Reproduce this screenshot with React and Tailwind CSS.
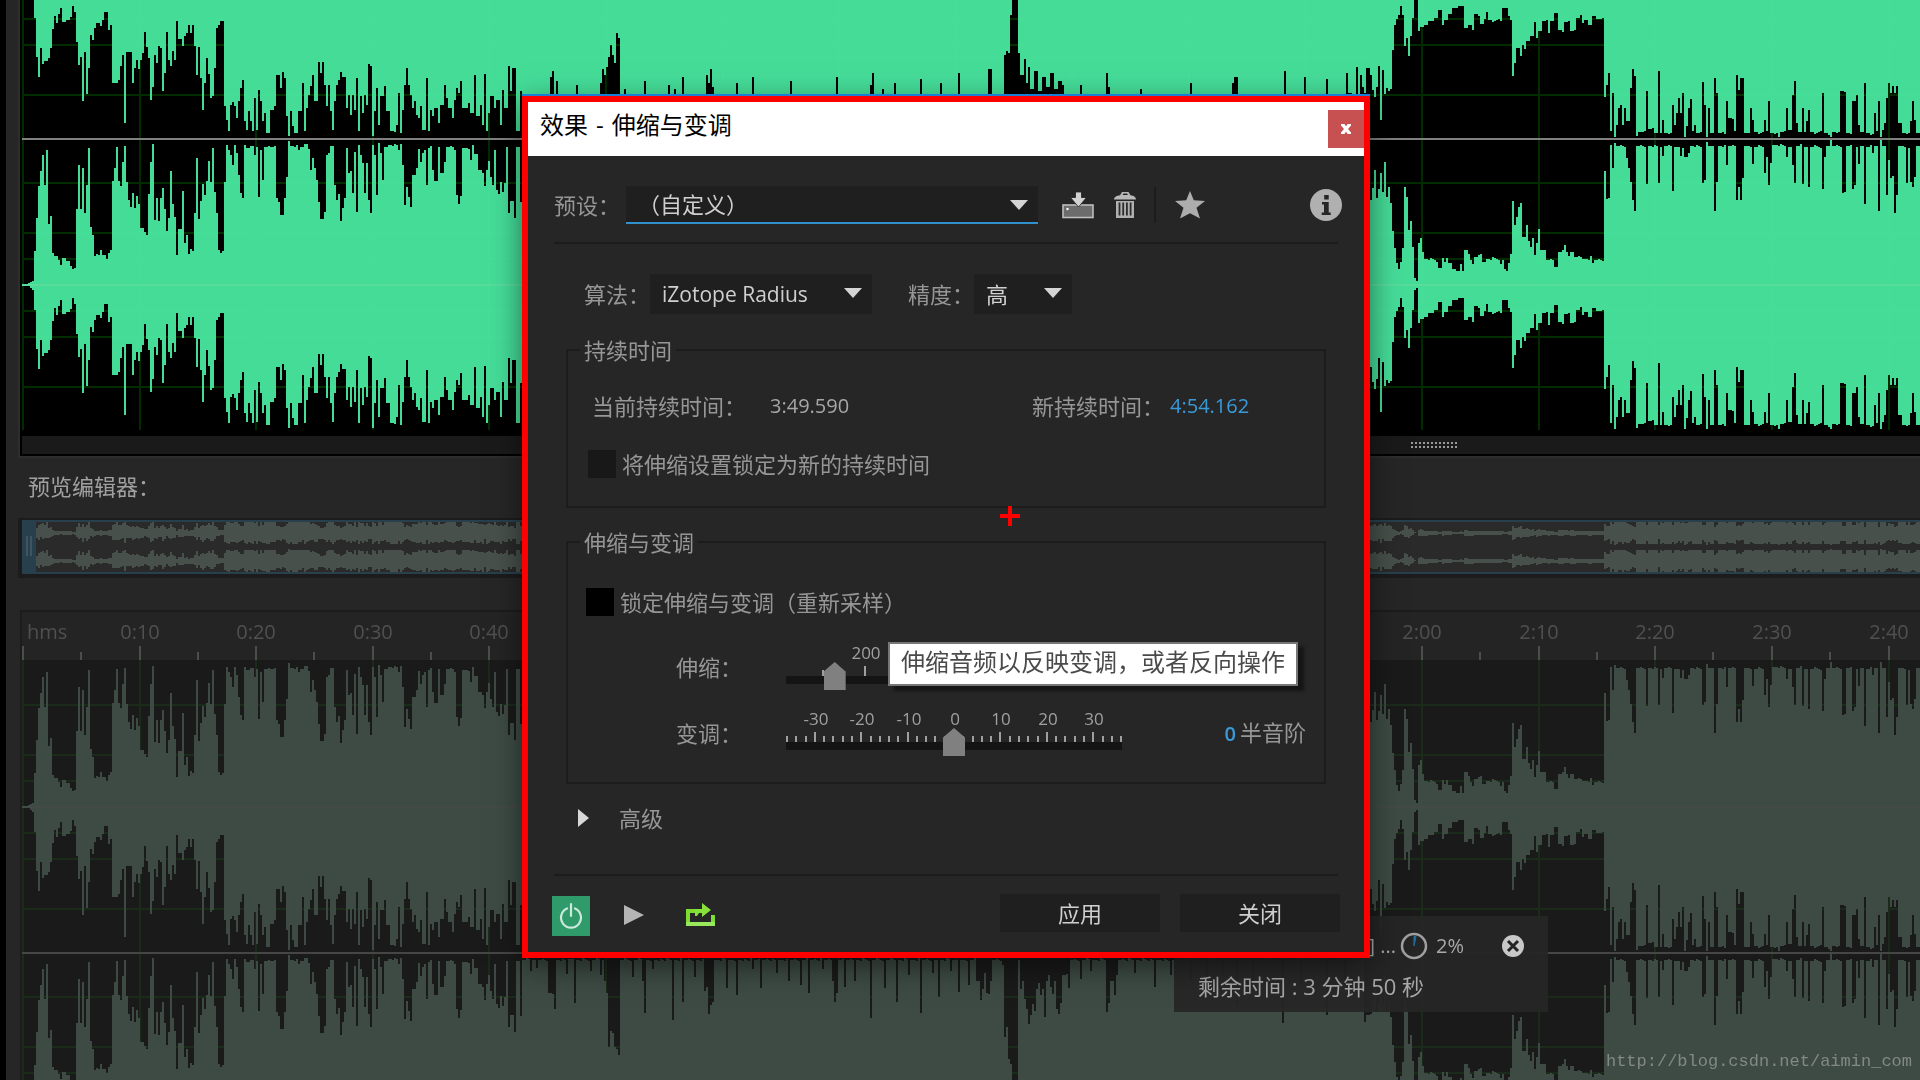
import { useState } from 'react'
import clsx from 'clsx'

// Peak envelopes, "x:amplitude". Each value holds until the next x.
const PEAKS_UP = `
22:0 25:1 28:2 30:3 32:4 34:34 36:67 38:99 40:114 42:130 44:100 46:135 48:61 50:69 52:32 54:29 57:25 59:20 61:14 62:27 66:24 70:19 72:16 74:17
76:76 78:120 80:76 82:117 84:72 86:100 88:137 90:58 92:50 94:29 96:31 98:30 100:35 102:30 106:26 108:32 110:35 112:104 114:117 116:138 118:104
120:99 122:123 124:139 126:103 128:85 130:78 132:92 134:77 136:89 138:81 140:57 144:53 146:50 148:91 150:123 152:141 154:65 156:87 158:64 160:87
162:97 164:76 166:54 168:67 170:114 172:81 174:68 176:30 178:56 182:94 184:42 186:50 188:31 190:36 192:34 194:72 196:127 198:66 200:84 202:101
204:90 206:104 208:124 210:103 212:137 214:93 216:72 218:35 220:32 222:34 224:103 226:140 228:135 230:130 232:120 234:140 236:132 238:110 240:92
242:87 244:140 246:137 250:139 254:130 256:138 258:88 260:135 262:105 264:138 270:138 274:139 276:87 278:83 280:70 284:87 286:108 288:144 290:139
298:135 300:138 304:141 308:136 310:115 312:127 314:117 316:105 318:83 320:66 324:73 326:130 328:132 330:139 334:100 336:85 338:91 340:64 342:77
344:87 346:137 348:112 350:114 352:92 354:133 356:73 358:140 360:130 362:122 364:92 366:122 368:85 370:72 372:140 374:130 376:90 378:142 380:132
382:105 384:138 388:140 398:135 400:141 402:120 404:80 406:98 408:88 410:78 412:110 416:117 418:136 420:123 422:132 424:135 426:100 428:137
430:139 432:115 434:104 438:138 440:112 444:123 446:138 454:135 456:90 458:81 460:89 462:137 470:125 472:140 474:131 478:115 482:112 484:99
486:115 488:124 490:108 492:100 494:135 496:95 498:91 500:103 502:93 504:102 506:138 508:72 510:84 514:67 516:138 520:83 522:139
530:128 532:139 536:131 538:139 548:106 552:105 554:90 556:139 566:125 568:140 574:96 576:139 590:128 592:139 600:124 602:139 604:118 606:106
608:52 610:68 612:66 614:52 616:50 618:44 620:139 632:122 634:139 642:118 644:86 646:139 652:130 654:139 672:79 674:139 682:97 684:139 694:122
696:139 704:108 706:112 708:85 710:94 712:97 714:139 726:111 728:139 736:104 738:139 752:130 754:139 760:111 762:139 776:126 778:139 788:118
790:139 800:114 802:139 808:106 810:139 822:130 824:139 832:118 834:97 836:106 838:139 844:112 846:139 854:118 856:139 870:81 872:139 884:111
886:139 896:97 898:139 908:124 910:139 920:86 922:139 932:126 934:139 938:102 940:139 950:128 952:139 958:107 960:139 968:114 970:139 976:118
980:99 982:110 984:126 986:106 988:105 990:118 992:139 1002:134 1004:62 1006:72 1008:40 1010:35 1012:5 1018:139 1020:110 1022:118 1024:100
1026:90 1028:75 1030:84 1032:95 1034:88 1036:110 1038:116 1040:104 1042:110 1044:82 1046:118 1048:124 1050:112 1052:105 1054:118 1056:90
1058:85 1060:96 1062:124 1068:111 1070:139 1080:120 1082:139 1090:128 1092:139 1106:87 1108:96 1110:118 1114:104 1116:124 1118:139 1134:126
1136:139 1154:112 1156:139 1170:124 1172:139 1190:118 1192:139 1206:108 1208:139 1222:124 1224:139 1236:94 1238:139 1252:116 1254:139
1282:76 1284:139 1300:112 1302:139 1326:84 1328:139 1344:116 1346:139 1364:77 1366:84
1370:85 1372:97 1374:115 1376:87 1378:96 1380:112 1382:93 1384:123 1386:88 1388:98 1390:82 1392:54 1394:37 1396:22 1398:16 1400:23 1402:37
1404:98 1406:88 1408:55 1410:64 1412:38 1414:7 1416:4 1418:42 1420:47 1422:33 1424:26 1436:23 1438:17 1442:27 1444:23 1446:27 1448:22 1452:16
1456:14 1460:21 1462:14 1464:35 1468:31 1470:25 1472:21 1474:28 1480:31 1482:23 1486:26 1500:21 1502:25 1504:16 1506:14 1508:22 1510:31
1512:84 1514:60 1516:68 1518:78 1520:82 1522:48 1526:60 1528:44 1530:38 1532:47 1534:30 1536:42 1538:56 1540:35 1546:25 1554:18 1558:33
1564:40 1566:33 1568:29 1570:33 1574:28 1582:26 1590:29 1592:22 1594:25 1604:114 1606:86 1608:87 1610:140 1612:117 1614:142 1616:139 1626:127
1628:117 1630:103 1632:85 1634:74 1636:139 1646:101 1648:139 1658:102 1660:138 1662:129 1664:139 1672:94 1674:138 1680:129 1682:137 1684:128
1688:132 1690:139 1702:102 1704:105 1706:143 1708:139 1714:74 1716:103 1718:139 1726:120 1728:139 1736:85 1738:98 1740:85 1742:107 1744:139
1752:121 1754:138 1764:112 1766:128 1768:100 1770:122 1772:140 1786:128 1788:138 1792:120 1794:102 1796:139 1802:101 1804:138 1808:98 1810:138
1822:96 1824:128 1826:139 1830:145 1832:139 1842:92 1844:93 1846:139 1852:96 1854:100 1856:138 1858:121 1860:139 1864:81 1866:138 1872:132
1874:139 1878:74 1880:145 1882:139 1886:90 1888:125 1890:107 1892:109 1894:72 1896:90 1898:139 1906:102 1908:137 1910:103 1912:98 1914:108 1916:139`

const PEAKS_DOWN = `
22:0 26:1 30:3 32:5 34:25 36:64 38:84 40:55 42:71 44:68 48:65 50:55 52:36 54:23 56:30 58:21 60:15 62:29 66:27 70:24 72:13 74:19 76:49 78:72
80:64 82:108 84:59 86:101 88:75 90:42 92:47 94:35 96:30 100:33 102:27 104:19 108:37 110:32 112:90 118:87 120:73 122:62 124:130 126:59 132:90
134:75 136:67 138:76 140:67 142:60 144:39 146:54 148:65 150:107 152:94 154:62 156:70 158:53 160:55 162:98 164:80 166:39 168:67 170:73 172:58
174:67 176:28 178:46 182:53 184:43 186:40 188:32 190:40 192:32 194:53 196:82 198:54 200:85 202:117 204:90 206:65 208:81 210:105 212:103 214:75
216:35 218:32 220:28 224:113 226:127 228:138 230:112 232:109 234:113 236:125 238:108 240:95 242:87 244:128 246:137 248:118 250:128 252:138
254:105 256:137 258:97 260:108 262:128 264:120 266:140 270:117 274:113 276:82 280:95 282:79 284:85 286:123 288:143 290:118 292:133 294:140
298:118 302:90 304:138 306:115 308:102 310:93 312:82 314:108 318:69 320:80 322:69 324:92 326:113 328:92 330:118 332:137 334:108 336:92 338:87
340:79 342:84 346:115 348:102 350:122 352:102 354:117 356:85 358:138 360:103 362:120 364:102 366:112 368:71 370:73 372:143 374:118 376:95
378:132 380:103 384:93 386:118 390:138 396:132 398:100 400:140 402:117 404:92 406:75 408:92 410:102 412:115 414:108 416:122 418:125 420:113
422:137 426:85 428:138 430:117 432:123 434:115 438:130 440:112 444:92 446:105 448:115 452:125 454:107 456:95 458:100 460:88 462:115 468:110
470:120 474:82 476:123 480:112 482:132 484:81 486:138 488:120 490:103 494:115 496:107 500:132 502:97 504:115 508:73 510:98 512:75 516:138
520:98 522:130 550:84 552:78 554:118 556:88 558:130 576:92 578:130 600:90 602:76 604:82 606:74 608:64 610:52 612:62 614:70 616:40 618:45 620:120
624:96 626:130 644:88 646:130 667:92 670:130 673:96 675:130 682:84 684:130 706:82 708:90 710:76 712:94 714:130 736:90 738:130 752:84 754:130
790:88 792:130 835:84 837:130 870:92 872:80 874:130 881:96 883:130 894:90 896:130 920:86 922:130 939:90 941:130 957:80 959:130 988:76 992:130
1004:62 1006:58 1008:60 1010:22 1012:6 1018:60 1020:82 1024:66 1026:90 1028:74 1030:96 1034:78 1038:98 1042:84 1046:94 1050:80 1054:96 1058:88
1062:92 1064:130 1080:92 1082:130 1106:80 1108:94 1110:130 1140:96 1142:130 1190:90 1192:130 1231:90 1233:84 1237:130 1283:78 1285:130
1303:84 1305:130 1325:86 1327:130 1345:80 1347:100 1355:74 1357:110 1360:82 1362:94 1364:100 1366:75
1370:82 1372:97 1374:104 1376:94 1378:73 1380:127 1382:77 1384:101 1386:95 1388:98 1390:96 1392:57 1394:32 1396:26 1398:22 1400:13 1402:22
1404:53 1406:45 1408:63 1410:43 1412:25 1414:5 1416:3 1418:38 1420:34 1424:32 1428:28 1434:25 1438:17 1442:32 1444:27 1448:21 1452:15 1458:13
1464:35 1468:32 1472:37 1474:21 1480:31 1484:26 1486:19 1488:27 1502:15 1508:23 1510:27 1512:83 1514:70 1516:55 1520:63 1522:52 1524:56
1526:48 1530:43 1534:29 1536:45 1538:38 1542:28 1548:40 1550:28 1554:20 1558:37 1564:29 1570:38 1576:25 1580:22 1582:30 1584:27 1588:32
1592:23 1596:26 1604:104 1606:92 1608:80 1610:138 1612:100 1614:144 1616:132 1618:115 1620:112 1622:132 1624:115 1626:128 1630:95 1632:76
1634:83 1636:143 1638:139 1646:98 1648:136 1654:140 1658:78 1660:140 1662:127 1664:140 1672:112 1674:132 1676:120 1678:105 1680:120 1682:100
1684:144 1686:133 1688:115 1690:106 1692:138 1694:132 1696:140 1702:89 1704:112 1706:144 1708:115 1710:140 1714:85 1716:100 1718:140 1726:108
1728:125 1734:138 1736:82 1738:97 1740:85 1744:140 1750:115 1752:127 1754:139 1764:127 1766:138 1768:108 1770:140 1778:144 1780:139 1786:115
1788:137 1792:102 1794:88 1796:130 1798:139 1802:115 1804:139 1806:128 1808:117 1810:139 1822:100 1824:140 1830:144 1832:139 1840:98 1846:140
1852:108 1856:102 1858:132 1860:139 1864:90 1866:140 1874:120 1876:138 1878:108 1880:144 1882:137 1884:130 1886:105 1888:90 1890:100 1892:93
1894:100 1896:93 1898:130 1902:140 1910:128 1912:108 1914:127 1916:140`

const START = 22
const END = 1920

// Expand the peaks to 2-unit columns; long loud runs get a little ripple
function expand(text) {
  const peaks = text.trim().split(/\s+/).map(p => p.split(':').map(Number))
  const columns = []
  let i = 0
  for (let x = START; x < END; x += 2) {
    while (i + 1 < peaks.length && peaks[i + 1][0] <= x) i++
    const [from, amp] = peaks[i]
    const ripple = amp > 20 && x - from >= 4 ? ((x * 13) % 7 >> 1) - 1 : 0
    columns.push(amp + ripple)
  }
  return columns
}

const UP = expand(PEAKS_UP)
const DOWN = expand(PEAKS_DOWN)

function wavePath(center, scale = 1) {
  let d = `M${START} ${center}`
  UP.forEach((a, i) => { d += `V${center - a * scale}H${START + (i + 1) * 2}` })
  for (let i = DOWN.length - 1; i >= 0; i--) {
    d += `V${center + DOWN[i] * scale}H${START + i * 2}`
  }
  return d + 'Z'
}

const TICK_STEP = 116.6
const MAJORS = Array.from({ length: 17 }, (_, i) => Math.round(23 + i * TICK_STEP))
const MINORS = Array.from({ length: 16 }, (_, i) => Math.round(81 + i * TICK_STEP))
const DB_LINES = [-102, -52, -26, 26, 52, 102]

function timeLabel(i) {
  const s = i * 10
  return `${Math.floor(s / 60)}:${String(s % 60).padStart(2, '0')}`
}

function Grid({ centers, height, fill, className }) {
  return (
    <g fill={fill} className={className}>
      {MAJORS.map(x => <rect key={x} x={x - 1} y="0" width="2" height={height} />)}
      {centers.map(c => DB_LINES.map(o => (
        <rect key={c + o} x={START} y={c + o - 1} width={END - START} height="2" />
      )))}
    </g>
  )
}

function WaveView({ className, height, centers, divider, wave, grid, glow, axis, line }) {
  return (
    <svg
      className={clsx('block w-full', className)}
      viewBox={`${START} 0 ${END - START} ${height}`}
      preserveAspectRatio="none"
      shapeRendering="crispEdges"
      aria-hidden="true"
    >
      <Grid centers={centers} height={height} fill={grid} />
      {centers.map(c => <path key={c} d={wavePath(c)} fill={wave} />)}
      {glow && <Grid centers={centers} height={height} fill={glow} className="mix-blend-screen" />}
      {centers.map(c => <rect key={c} x={START} y={c - 1} width={END - START} height="2" fill={axis} />)}
      <rect x={START} y={divider - 1} width={END - START} height="2" fill={line} />
    </svg>
  )
}

function Ruler() {
  return (
    <svg
      className="block w-full h-12 bg-[#242424]"
      viewBox={`${START} 0 ${END - START} 48`}
      shapeRendering="crispEdges"
      role="img"
      aria-label="hms"
    >
      <g className="fill-[#505050] text-xl font-medium" shapeRendering="auto">
        <text x="27" y="27">hms</text>
        {MAJORS.map((x, i) => i > 0 && <text key={x} x={x} y="27" textAnchor="middle">{timeLabel(i)}</text>)}
      </g>
      <g fill="#4d4d4d">
        {MAJORS.map(x => <rect key={x} x={x - 1} y="34" width="2" height="14" />)}
        {MINORS.map(x => <rect key={x} x={x - 1} y="40" width="2" height="8" />)}
      </g>
    </svg>
  )
}

function Navigator() {
  return (
    <div className="-ml-1 border-y-2 border-l-4 border-[#1c1c1c] border-b-4 bg-[#2a2a2a]">
      <svg
        className="block w-full h-[54px]"
        viewBox={`${START} 0 ${END - START} 54`}
        preserveAspectRatio="none"
        shapeRendering="crispEdges"
        aria-hidden="true"
      >
        <path d={wavePath(13, 0.08)} fill="#47504a" />
        <path d={wavePath(41, 0.08)} fill="#47504a" />
        <path d="M22 0H1920V2H22ZM22 52H1920V54H22ZM22 0H36V54H22Z" fill="#28404d" />
        <path d="M26 16h2v20h-2zM30 16h2v20h-2z" fill="#40555f" />
      </svg>
    </div>
  )
}

function Select({ id, className, options, ...props }) {
  return (
    <div className={clsx('relative', className)}>
      <select id={id} className="block w-full h-full appearance-none bg-[#1f1f1f] text-[#cfcfcf] pl-3 outline-none" {...props}>
        {options.map(o => <option key={o}>{o}</option>)}
      </select>
      <svg className="absolute right-2.5 top-3.5 pointer-events-none" width="18" height="10" viewBox="0 0 18 10" aria-hidden="true">
        <path d="M0 0H18L9 10Z" fill="#d4d4d4" />
      </svg>
    </div>
  )
}

function Check({ label, dark }) {
  return (
    <label className="flex items-center gap-1.5">
      <input
        type="checkbox"
        className={clsx('appearance-none size-7 checked:bg-[#2f9a6a]', dark ? 'bg-black' : 'bg-[#181818]')}
      />
      {label}
    </label>
  )
}

function ScaleSlider({ id, label, ticks, labels, ...props }) {
  return (
    <div className="flex items-center">
      <label htmlFor={id} className="w-[110px] pt-1">{label}</label>
      <div className="w-[336px]">
        <svg className="block h-9 w-full" viewBox="0 0 336 36" shapeRendering="crispEdges" aria-hidden="true">
          {ticks.map(t => <rect key={t.x} x={t.x} y={t.major ? 26 : 30} width="2" height={t.major ? 10 : 6} fill="#a0a0a0" />)}
          <g className="fill-[#a0a0a0] text-[17px] font-medium" shapeRendering="auto">
            {labels.map(l => <text key={l.text} x={l.x} y="19" textAnchor="middle">{l.text}</text>)}
          </g>
        </svg>
        <input
          id={id}
          type="range"
          className="block w-full h-7 -mt-3.5 appearance-none bg-transparent bg-[linear-gradient(#141414,#141414)] bg-no-repeat bg-[length:100%_8px] bg-[position:0_14px] [&::-webkit-slider-thumb]:appearance-none [&::-webkit-slider-thumb]:w-[22px] [&::-webkit-slider-thumb]:h-7 [&::-webkit-slider-thumb]:bg-[#808080] [&::-webkit-slider-thumb]:[clip-path:polygon(50%_0,100%_34%,100%_100%,0_100%,0_34%)]"
          {...props}
        />
      </div>
    </div>
  )
}

const PITCH_TICKS = []
for (let s = -36; s <= 36; s += 2) {
  PITCH_TICKS.push({ x: Math.round((s + 36) * 4.64), major: s % 10 === 0 })
}
const PITCH_LABELS = [-30, -20, -10, 0, 10, 20, 30].map(s => ({
  x: Math.round((s + 36) * 4.64) + 2,
  text: String(s),
}))

const STRETCH_TICKS = [{ x: 36, major: false }, { x: 78, major: true }]
const STRETCH_LABELS = [{ x: 80, text: '200' }]

function SaveIcon() {
  return (
    <svg width="32" height="28" viewBox="0 0 32 28" aria-hidden="true">
      <rect x="1" y="14" width="30" height="12.5" fill="#6c6c6c" stroke="#bdbdbd" strokeWidth="1.6" />
      <path d="M13.500 1h6v5.500h5L16.500 16l-8-9.500h5z" fill="#d2d2d2" stroke="#1c1c1c" strokeWidth="0.800" />
      <circle cx="5.500" cy="18" r="1.200" fill="#fff" />
    </svg>
  )
}

function TrashIcon() {
  return (
    <svg width="22" height="28" viewBox="0 0 22 28" aria-hidden="true">
      <path d="M0 8.500C0 6 3 4.500 6 4.200L8 1h6.500l2 3.200c3 .3 5.500 1.800 5.500 4.300z" fill="#b8b8b8" />
      <path d="M8.500 4l1-1.400h3.500L14 4z" fill="#262626" />
      <path d="M2 10h18v17H2z" fill="#b0b0b0" />
      <path d="M5.500 11.500v13M9.200 11.500v13M12.900 11.500v13M16.600 11.500v13" stroke="#2c2c2c" strokeWidth="1.800" />
    </svg>
  )
}

function StarIcon() {
  return (
    <svg width="32" height="28" viewBox="0 0 32 28" aria-hidden="true">
      <path d="M16 0l3.800 9.300L31 10l-8.500 6.800L26 27.500l-10-5.300-10 5.300 3.500-10.700L1 10l11.200-.7z" fill="#adadad" />
    </svg>
  )
}

function InfoIcon() {
  return (
    <svg width="32" height="32" viewBox="0 0 32 32" aria-hidden="true">
      <circle cx="16" cy="16" r="16" fill="#b0b0b0" />
      <path d="M14.200 6h4.500v4.500h-4.500zM12 13h6.700v10.500h2V26h-9v-2.500h2.300v-8h-2z" fill="#262626" />
    </svg>
  )
}

function PowerIcon() {
  return (
    <svg width="24" height="28" viewBox="0 0 24 28" fill="none" strokeLinecap="round" aria-hidden="true">
      <path d="M8 6.500a10 10 0 1 0 8 0" stroke="#cfe8dc" strokeWidth="2.200" />
      <path d="M12 2v12" stroke="#cfe8dc" strokeWidth="2.200" />
    </svg>
  )
}

// Tray with an arrow leaving to the right
function LoopIcon() {
  return (
    <svg width="30" height="26" viewBox="0 0 30 26" aria-hidden="true">
      <path d="M0 7h10v4H4v9h21v-7h4v8H0z" fill="#7fdc30" />
      <path d="M0 20h29v4H0z" fill="#98e85c" />
      <path d="M9 7h7V1l9 7-9 7v-4h-3l-2 3H9z" fill="#86e23a" />
    </svg>
  )
}

function EffectDialog() {
  const [stretch, setStretch] = useState(12)
  const [pitch, setPitch] = useState(0)

  return (
    <section
      role="dialog"
      aria-labelledby="dialog-title"
      className="absolute left-[522px] top-24 w-[848px] border-6 border-[#f00] bg-[#262626] text-[22px] leading-7 text-[#969696] shadow-[0_-2px_0_#1b7fd6,0_8px_28px_rgba(0,0,0,0.5)]"
    >
      <header className="flex items-center justify-between h-[54px] bg-white pl-3">
        <h1 id="dialog-title" className="flex gap-2 text-2xl text-black pb-2">
          <span>效果</span>
          <span>-</span>
          <span>伸缩与变调</span>
        </h1>
        <button aria-label="关闭窗口" className="flex items-center justify-center w-9 h-[38px] bg-[#c75050]">
          <svg width="10" height="10" viewBox="0 0 10 10" aria-hidden="true">
            <path d="M0 0h3.500L5 2.500 6.500 0H10v1.500L7 5l3 3.500V10H6.500L5 7.500 3.500 10H0V8.500L3 5 0 1.500z" fill="#fff" />
          </svg>
        </button>
      </header>

      <div className="px-[26px] pt-[30px] pb-4">
        <div className="flex items-center h-[38px]">
          <label htmlFor="preset" className="w-[72px]">预设：</label>
          <Select
            id="preset"
            className="w-[412px] h-[38px] border-b-2 border-[#3191cc]"
            options={['（自定义）']}
          />
          <button aria-label="保存预设" className="ml-6"><SaveIcon /></button>
          <button aria-label="删除预设" className="ml-5"><TrashIcon /></button>
          <span className="ml-[18px] w-0.5 h-9 bg-[#1c1c1c]" />
          <button aria-label="收藏" className="ml-[18px]"><StarIcon /></button>
          <button aria-label="信息" className="ml-auto -mr-1"><InfoIcon /></button>
        </div>

        <hr className="mt-[18px] border-t-2 border-[#1c1c1c]" />

        <div className="flex items-center mt-[30px] pl-[30px]">
          <label htmlFor="algorithm" className="w-[66px]">算法：</label>
          <Select id="algorithm" className="w-[222px] h-10 text-[21px] font-medium" options={['iZotope Radius']} />
          <label htmlFor="precision" className="ml-9 w-[66px]">精度：</label>
          <Select id="precision" className="w-[98px] h-10" options={['高']} />
        </div>

        <fieldset className="mx-3 mt-6 pl-3 pb-7 border-2 border-[#1c1c1c]">
          <legend className="px-1 leading-6">持续时间</legend>
          <div className="flex mt-[30px] pl-3">
            <span className="w-[178px]">当前持续时间：</span>
            <output className="text-xl font-medium text-[#a6a6a6]">3:49.590</output>
            <label htmlFor="new-duration" className="ml-auto">新持续时间：</label>
            <input
              id="new-duration"
              className="w-40 pl-1.5 bg-transparent text-xl font-medium text-[#3a9ad9] outline-none"
              defaultValue="4:54.162"
            />
          </div>
          <div className="mt-[30px] pl-2">
            <Check label="将伸缩设置锁定为新的持续时间" />
          </div>
        </fieldset>

        <fieldset className="mx-3 mt-[22px] pl-3 pb-[26px] border-2 border-[#1c1c1c]">
          <legend className="px-1 leading-6">伸缩与变调</legend>
          <div className="mt-[34px] pl-1.5">
            <Check label="锁定伸缩与变调（重新采样）" dark />
          </div>
          <div className="flex flex-col gap-4 mt-6 pl-24">
            <ScaleSlider
              id="stretch"
              label="伸缩："
              ticks={STRETCH_TICKS}
              labels={STRETCH_LABELS}
              min={0}
              max={100}
              value={stretch}
              onChange={e => setStretch(Number(e.target.value))}
            />
            <div className="flex items-center justify-between pr-[18px]">
              <ScaleSlider
                id="pitch"
                label="变调："
                ticks={PITCH_TICKS}
                labels={PITCH_LABELS}
                min={-36}
                max={36}
                value={pitch}
                onChange={e => setPitch(Number(e.target.value))}
              />
              <span className="flex items-baseline gap-1 pt-1">
                <output htmlFor="pitch" className="text-xl font-semibold text-[#3a9ad9]">{pitch}</output>
                半音阶
              </span>
            </div>
          </div>
        </fieldset>

        <button className="flex items-center gap-[30px] mt-5 ml-6" aria-expanded="false">
          <svg width="11" height="18" viewBox="0 0 11 18" aria-hidden="true">
            <path d="M0 0L11 9L0 18Z" fill="#d8d8d8" />
          </svg>
          高级
        </button>

        <hr className="mt-[42px] border-t-2 border-[#1c1c1c]" />

        <footer className="flex items-start mt-5 -mx-0.5">
          <button aria-label="启用效果" className="flex items-center justify-center w-[38px] h-10 bg-[#2f9a6a]">
            <PowerIcon />
          </button>
          <div className="flex items-center gap-[42px] h-[38px] ml-[34px]">
            <button aria-label="播放">
              <svg width="20" height="20" viewBox="0 0 20 20" aria-hidden="true">
                <path d="M0 0L20 10L0 20Z" fill="#b4b4b4" />
              </svg>
            </button>
            <button aria-label="循环播放"><LoopIcon /></button>
          </div>
          <div className="flex gap-5 ml-auto -mt-0.5 text-[#cfcfcf]">
            <button className="w-40 h-[38px] bg-[#1f1f1f]">应用</button>
            <button className="w-40 h-[38px] bg-[#1f1f1f]">关闭</button>
          </div>
        </footer>
      </div>

      <div role="tooltip" className="absolute left-[360px] top-[540px] h-11 px-[11px] border-2 border-[#777] bg-white text-2xl leading-9 text-[#4a4a4a] whitespace-nowrap shadow-[6px_5px_3px_#151515]">
        伸缩音频以反映变调，或者反向操作
      </div>

      {/* pointer crosshair */}
      <svg className="absolute left-[472px] top-[404px]" width="20" height="20" viewBox="0 0 20 20" aria-hidden="true">
        <path d="M8 0h4v8h8v4h-8v8H8v-8H0V8h8z" fill="#f00" />
      </svg>
    </section>
  )
}

function ProgressToast() {
  return (
    <aside className="absolute left-[1174px] top-[916px] w-[374px] h-24 bg-[#262626]/95 pl-6 pt-4 text-[22px] leading-8 text-[#a8a8a8]">
      <div className="flex items-center justify-end pr-6 text-xl font-medium leading-7">
        <span className="mr-1">] ...</span>
        <svg width="28" height="28" viewBox="0 0 28 28" aria-hidden="true">
          <circle cx="14" cy="14" r="12" fill="none" stroke="#a0a0a0" strokeWidth="2.500" />
          <path d="M14 14V4.500h2z" fill="#1e6fa0" stroke="#1e6fa0" />
        </svg>
        <span className="ml-2 mr-[38px]">2%</span>
        <button aria-label="取消">
          <svg className="block" width="22" height="22" viewBox="0 0 22 22" aria-hidden="true">
            <circle cx="11" cy="11" r="11" fill="#c8c8c8" />
            <path d="M6 6l10 10M16 6L6 16" stroke="#222" strokeWidth="3" />
          </svg>
        </button>
      </div>
      <p className="mt-2.5">剩余时间 : 3 分钟 50 秒</p>
    </aside>
  )
}

export default function App() {
  return (
    <main className="relative min-h-screen overflow-hidden bg-[#262626] border-l-6 border-black font-['Open_Sans','Noto_Sans_CJK_SC',sans-serif]">
      <div className="ml-3">
        <div className="border-l-2 border-b-2 border-[#2d2d2d]">
          <div className="border-l-2 border-b-2 border-black bg-black">
            <WaveView
              className="h-[430px] bg-black"
              height={430}
              centers={[-7, 285]}
              divider={139}
              wave="#45dc98"
              grid="#002200"
              glow="#000c00"
              axis="#58dc9a"
              line="#808080"
            />
            <div className="flex justify-center mt-1.5 h-[18px] bg-[#1a1a1a]">
              <svg className="relative left-[463px] top-1.5" width="46" height="6" aria-hidden="true">
                <path d="M0 1H46M0 5H46" stroke="#9a9a9a" strokeWidth="2" strokeDasharray="2 2" />
              </svg>
            </div>
          </div>
        </div>

        <div className="ml-1">
          <h2 className="h-[60px] pt-3 pl-1.5 text-[22px] leading-8 text-[#a0a0a0]">预览编辑器：</h2>
          <Navigator />
          <div className="mt-8 -ml-0.5 border-l-2 border-t-2 border-[#1c1c1c]">
            <Ruler />
            <WaveView
              className="h-[420px] bg-[#1a1a1a]"
              height={420}
              centers={[147, 439]}
              divider={293}
              wave="#3d4b44"
              grid="#1a2b1a"
              axis="#444a44"
              line="#464646"
            />
          </div>
        </div>
      </div>

      <div className="absolute inset-y-0 -left-1.5">
        <ProgressToast />
        <EffectDialog />
      </div>

      <a
        href="http://blog.csdn.net/aimin_com"
        className="absolute right-2 bottom-1.5 font-['Liberation_Mono',monospace] text-[17px] leading-6 text-[#838985]"
      >
        http://blog.csdn.net/aimin_com
      </a>
    </main>
  )
}
